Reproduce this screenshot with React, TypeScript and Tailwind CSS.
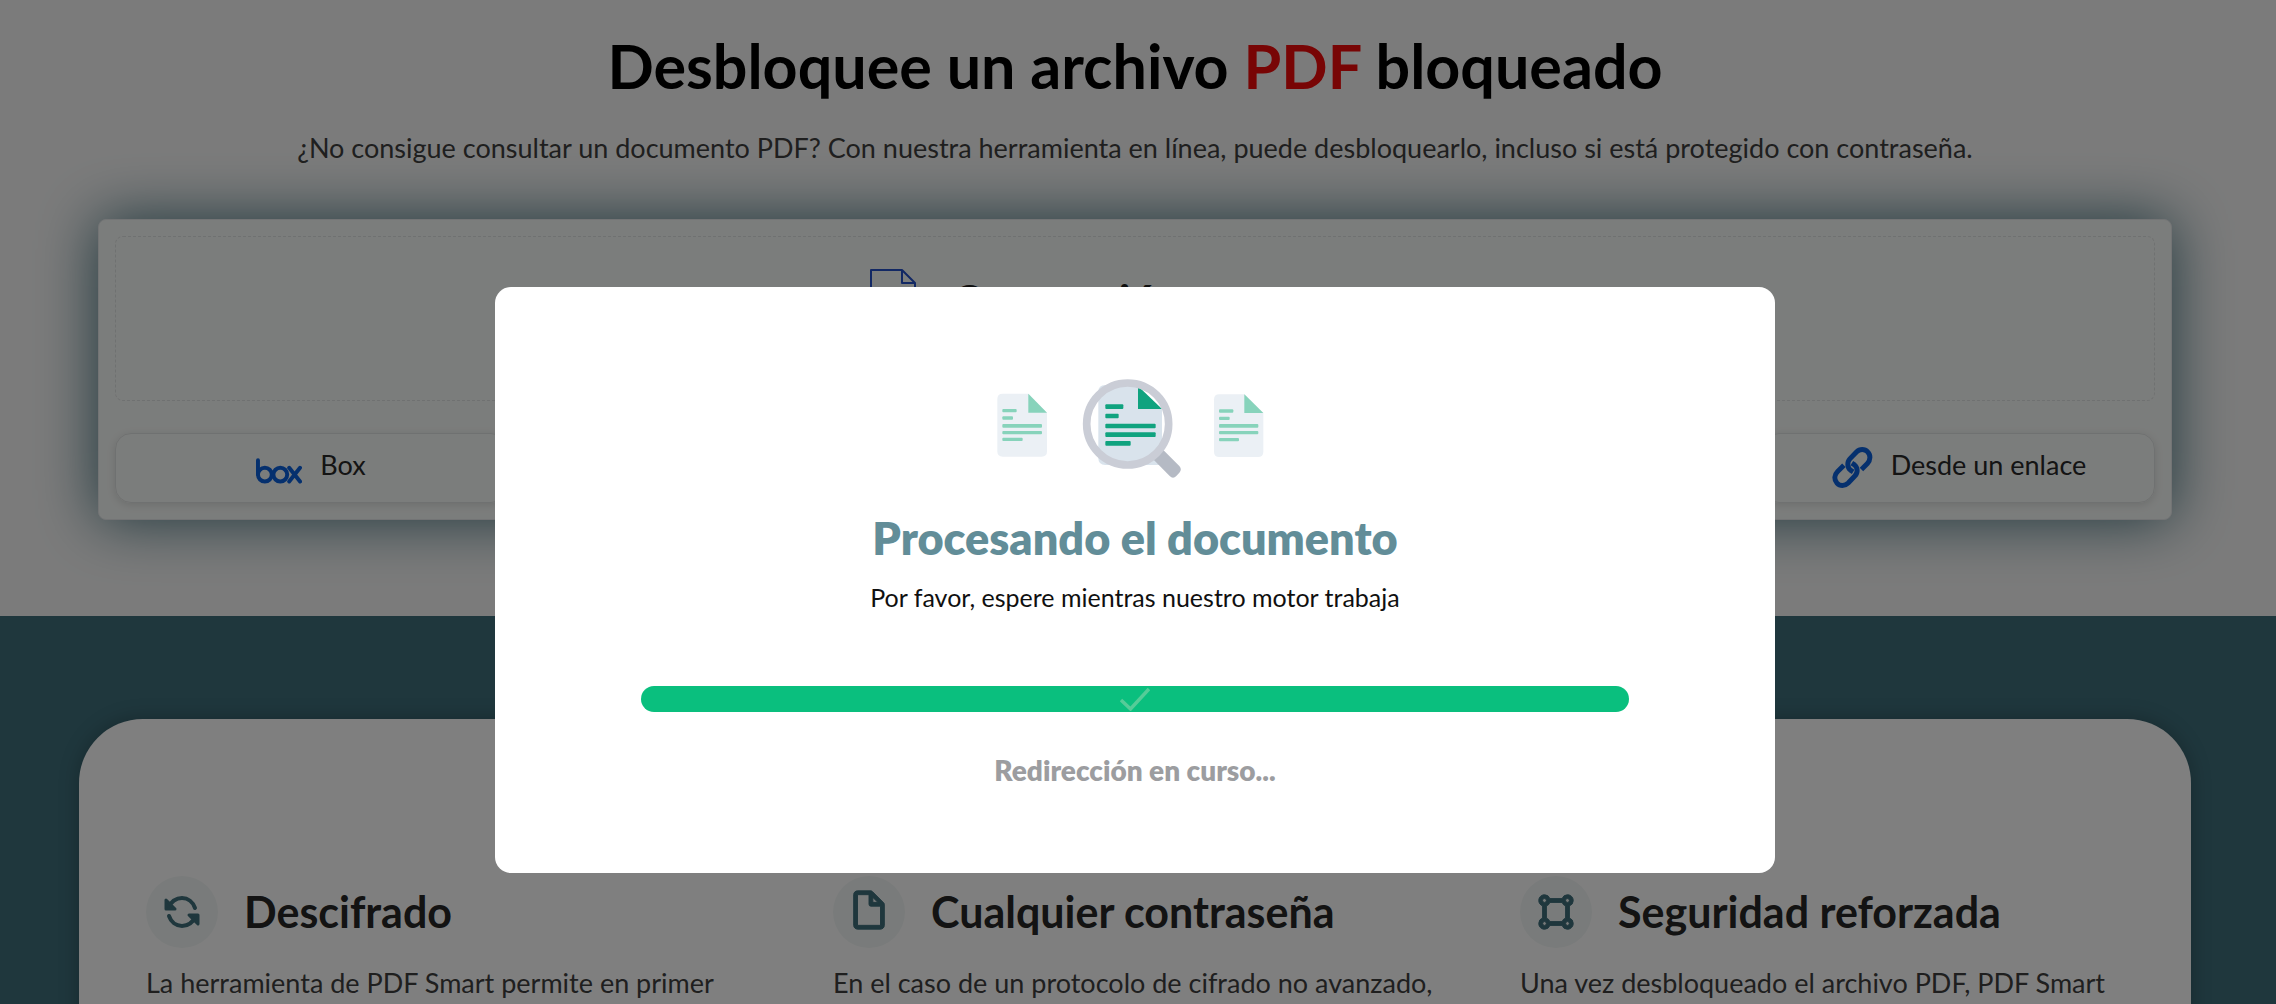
import type { ReactNode } from "react";
import { BiFileBlank, BiShapeSquare } from "react-icons/bi";

function BoxLogo() {
  return (
    <svg viewBox="0 0 140 78" className="mt-3 h-[26px] w-[46px]" fill="none" stroke="#0b61dc" strokeWidth="12" strokeLinecap="round" aria-hidden="true">
      <path d="M6 6V50" />
      <circle cx="27" cy="50" r="21" />
      <circle cx="74" cy="50" r="21" />
      <path d="M101 29L134 71M134 29L101 71" />
    </svg>
  );
}

function ChainIcon() {
  return (
    <svg viewBox="0 0 122 124" className="mt-1 h-[41px] w-[41px]" fill="none" stroke="#0b61dc" strokeWidth="15" aria-hidden="true">
      <path d="M88 68L106 50C116 39 116 24 107 15C98 5 83 5 73 15L53 36C44 46 45 62 55 70L63 75" />
      <path d="M35 55L16 74C5 85 5 99 14 109C23 119 38 119 48 109L68 88C78 78 77 62 67 54L59 49" />
    </svg>
  );
}

function FileOutline() {
  return (
    <svg viewBox="0 0 46 60" className="h-[60px] w-[46px]" fill="none" stroke="#2450c8" strokeWidth="2" strokeLinejoin="round" aria-hidden="true">
      <path d="M1 1H32L45 14V59H1Z" />
      <path d="M32 1V14H45" />
    </svg>
  );
}

function CycleArrows() {
  return (
    <svg viewBox="0 0 38 32" className="h-8 w-[38px]" fill="none" stroke="currentColor" strokeWidth="4" strokeLinecap="round" strokeLinejoin="round" aria-hidden="true">
      <path d="M5 12C8 6 13 2 19 2C25 2 30 6 32 12" />
      <path d="M3 4V13H12Z" fill="currentColor" strokeWidth="3" />
      <path d="M33 20C30 26 25 30 19 30C13 30 8 26 6 20" />
      <path d="M35 28V19H26Z" fill="currentColor" strokeWidth="3" />
    </svg>
  );
}

function SearchIllustration() {
  return (
    <svg viewBox="90 36 870 336" className="h-28 w-[290px]" aria-hidden="true">
      <g fill="#ebf0f5">
        <path d="M128 101H205L261 158V274Q261 290 245 290H128Q112 290 112 274V117Q112 101 128 101Z" />
        <path d="M778 103H854L910 159V275Q910 291 894 291H778Q762 291 762 275V119Q762 103 778 103Z" />
      </g>
      <g fill="#87d3bb">
        <path d="M205 101L261 158H205Z" />
        <rect x="127" y="147" width="43" height="10" rx="3" />
        <rect x="127" y="169" width="32" height="10" rx="3" />
        <rect x="127" y="192" width="119" height="11" rx="3" />
        <rect x="127" y="213" width="119" height="10" rx="3" />
        <rect x="127" y="233" width="61" height="10" rx="3" />
        <path d="M853 103L910 159H853Z" />
        <rect x="777" y="148" width="43" height="10" rx="3" />
        <rect x="777" y="170" width="32" height="10" rx="3" />
        <rect x="777" y="192" width="118" height="11" rx="3" />
        <rect x="777" y="213" width="118" height="10" rx="3" />
        <rect x="777" y="234" width="60" height="10" rx="3" />
      </g>
      <path d="M436 75H530L606 147V315H436Q415 315 415 295V95Q415 75 436 75Z" fill="#d9e3ec" />
      <path d="M578 296L610 270L658 318Q667 328 658 338L649 348Q639 358 629 348Z" fill="#b5bac4" />
      <path d="M534 78L606 147H534Z" fill="#10a37f" />
      <circle cx="503" cy="192" r="123" fill="none" stroke="#cacdd6" strokeWidth="23" />
      <g fill="#10a37f">
        <rect x="436" y="133" width="54" height="14" rx="3" />
        <rect x="436" y="161" width="40" height="14" rx="3" />
        <rect x="436" y="191" width="151" height="14" rx="3" />
        <rect x="436" y="217" width="151" height="14" rx="3" />
        <rect x="436" y="243" width="76" height="14" rx="3" />
      </g>
    </svg>
  );
}

function SourceButton({ icon, label, place }: { icon: ReactNode; label: string; place: string }) {
  return (
    <button type="button" className={`${place} flex h-[70px] items-center justify-center gap-[18px] rounded-2xl border border-[#dfe2e2] pb-1.5 shadow-[0_2px_8px_#0000001f]`}>
      {icon}
      <span className="text-[27px] leading-9 text-[#282828]">{label}</span>
    </button>
  );
}

const features = [
  { icon: <CycleArrows />, title: "Descifrado", text: "La herramienta de PDF Smart permite en primer" },
  { icon: <BiFileBlank stroke="currentColor" strokeWidth="0.5" className="mb-1" />, title: "Cualquier contraseña", text: "En el caso de un protocolo de cifrado no avanzado," },
  { icon: <BiShapeSquare stroke="currentColor" strokeWidth="0.5" />, title: "Seguridad reforzada", text: "Una vez desbloqueado el archivo PDF, PDF Smart" },
];

export default function App() {
  return (
    <div className="h-screen overflow-hidden bg-[#f7f7f7] font-['Lato',sans-serif]">
      <header className="pt-[30px] pr-1.5 text-center">
        <h1 className="text-[61px] leading-[72px] font-bold text-black">
          Desbloquee un archivo <span className="text-[#f10a0a]">PDF</span> bloqueado
        </h1>
        <p className="mt-7 text-[27px] leading-9 text-[#3e3e3e]">
          ¿No consigue consultar un documento PDF? Con nuestra herramienta en línea, puede desbloquearlo, incluso si está protegido con contraseña.
        </p>
      </header>

      <main>
        <section className="mt-[53px] mr-[104px] ml-[98px] rounded-lg border border-[#e6e9eb] bg-[#f7faf8] p-4 shadow-[0_0_60px_#3e6e7a]">
          <div className="flex h-[165px] justify-center gap-9 rounded-lg border border-dashed border-[#dfe2e2] pt-8">
            <FileOutline />
            <p className="pt-1 text-[46px] leading-[56px] font-bold text-[#1e1e1e]">Conversión en curso...</p>
          </div>
          <div className="mt-8 grid grid-cols-5 gap-5">
            <SourceButton place="col-start-1" icon={<BoxLogo />} label="Box" />
            <SourceButton place="col-start-5" icon={<ChainIcon />} label="Desde un enlace" />
          </div>
        </section>

        <section className="mt-24 bg-[#3e6e7a] pt-[103px] pr-[85px] pl-[79px]">
          <div className="grid grid-cols-3 gap-x-[83px] rounded-[64px] bg-white px-[67px] pt-[157px] pb-40 shadow-[0_0_20px_#00000040]">
            {features.map((feature) => (
              <article key={feature.title}>
                <div className="flex items-center gap-[26px]">
                  <span className="flex size-[72px] shrink-0 items-center justify-center rounded-full bg-[#f3f7f6] text-[46px] text-[#3e6e7a]">
                    {feature.icon}
                  </span>
                  <h2 className="text-[43px] leading-[52px] font-bold whitespace-nowrap text-[#262626]">{feature.title}</h2>
                </div>
                <p className="mt-[15px] text-[27px] leading-10 text-[#3e3e3e]">{feature.text}</p>
              </article>
            ))}
          </div>
        </section>
      </main>

      <div className="fixed inset-0 flex items-start justify-center bg-black/50 pt-[287px] pr-1.5">
        <div role="dialog" aria-modal="true" aria-labelledby="dialog-title" className="flex w-full max-w-7xl flex-col items-center rounded-2xl bg-white px-[146px] pt-[85px] pb-[85px] text-center">
          <SearchIllustration />
          <h2 id="dialog-title" className="mt-[26px] text-[45px] leading-[56px] font-extrabold text-[#628d98]">
            Procesando el documento
          </h2>
          <p className="mt-[15px] text-[25px] leading-8 text-[#101010]">Por favor, espere mientras nuestro motor trabaja</p>
          <div role="progressbar" aria-labelledby="dialog-title" aria-valuenow={100} aria-valuemin={0} aria-valuemax={100} className="mt-[73px] flex h-[26px] w-full items-center justify-center rounded-full bg-[#0abf7e]">
            <svg viewBox="0 0 30 24" className="h-6 w-[30px]" fill="none" stroke="#55cc98" strokeWidth="3.5" aria-hidden="true">
              <path d="M1 13L10.500 22L29 2" />
            </svg>
          </div>
          <p className="mt-10 text-[28px] leading-9 font-extrabold text-[#9c9da0]">Redirección en curso...</p>
        </div>
      </div>
    </div>
  );
}
